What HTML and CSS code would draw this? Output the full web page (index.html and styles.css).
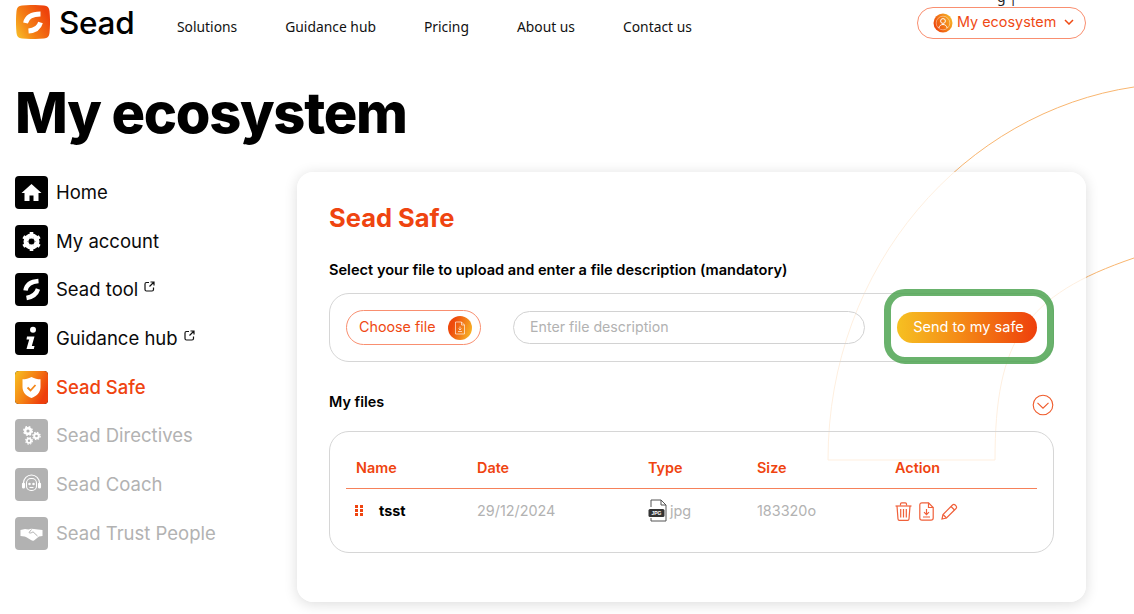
FILE: index.html
```html
<!DOCTYPE html>
<html lang="en">
<head>
    <meta charset="UTF-8">
    <meta name="viewport" content="width=device-width, initial-scale=1.0">
    <title>My ecosystem - Sead</title>
    <link rel="stylesheet" href="styles.css">
</head>
<body>
    <svg width="0" height="0" class="defs">
        <defs>
            <linearGradient id="brand" x1="0" y1="0" x2="1" y2="0.5">
                <stop offset="0" stop-color="#f7c122"/>
                <stop offset="0.55" stop-color="#f47f14"/>
                <stop offset="1" stop-color="#ee3f0c"/>
            </linearGradient>
            <linearGradient id="logo" x1="0" y1="1" x2="1" y2="0.4">
                <stop offset="0" stop-color="#f8c32a"/>
                <stop offset="0.45" stop-color="#f47f14"/>
                <stop offset="1" stop-color="#ee430c"/>
            </linearGradient>
            <linearGradient id="brand-rev" x1="0" y1="0.5" x2="1" y2="0">
                <stop offset="0" stop-color="#ee4a0c"/>
                <stop offset="1" stop-color="#f8c32a"/>
            </linearGradient>
        </defs>
    </svg>

    <!-- decorative arcs behind the card -->
    <svg class="arcs" width="1134" height="614" viewBox="0 0 1134 614">
        <path d="M1134 87C965 112 828 265 828 460H995C995 340 1025 295 1134 258"/>
    </svg>

    <div class="top-clip">g |</div>

    <header class="header">
        <a class="logo" href="#">
            <svg width="34" height="34" viewBox="0 0 34 34">
                <path d="M6 0.500C13 -0.200 21 -0.200 28 0.500C31.500 0.900 33.200 2.500 33.500 6C34.200 13 34.200 21 33.500 28C33.200 31.500 31.500 33.200 28 33.500C21 34.200 13 34.200 6 33.500C2.500 33.200 0.800 31.500 0.500 28C-0.200 21 -0.200 13 0.500 6C0.800 2.500 2.500 0.900 6 0.500Z" fill="url(#logo)"/>
                <path d="M24.500 9C17 9 11 11 9.500 18M24.500 17.500C23 23 19 25.500 12.500 26" fill="none" stroke="#fff" stroke-width="4.800"/>
            </svg>
            <span>Sead</span>
        </a>
        <nav class="nav">
            <a href="#">Solutions</a>
            <a href="#">Guidance hub</a>
            <a href="#">Pricing</a>
            <a href="#">About us</a>
            <a href="#">Contact us</a>
        </nav>
        <button class="eco-btn">
            <svg width="20" height="20" viewBox="0 0 20 20">
                <circle cx="10" cy="10" r="9.500" fill="url(#brand-rev)"/>
                <circle cx="10" cy="10" r="6.800" fill="none" stroke="#fff" stroke-opacity=".5" stroke-width=".8"/>
                <circle cx="10" cy="8" r="2.400" fill="none" stroke="#fff" stroke-width="1"/>
                <path d="M5.800 15C6.500 12.500 8 11.500 10 11.500S13.500 12.500 14.200 15" fill="none" stroke="#fff" stroke-width="1"/>
            </svg>
            <span>My ecosystem</span>
            <svg width="10" height="6" viewBox="0 0 10 6"><path d="M1 1L5 5L9 1" fill="none" stroke="#ef4a14" stroke-width="1.500"/></svg>
        </button>
    </header>

    <h1 class="title">My ecosystem</h1>

    <div class="main">
        <ul class="side">
            <li class="side-item">
                <span class="side-icon">
                    <svg width="21" height="21" viewBox="0 0 21 21"><path d="M10.500 2L20.500 11H17.500V19H12.500V13.500H8.500V19H3.500V11H0.500Z" fill="#fff"/></svg>
                </span>
                Home
            </li>
            <li class="side-item">
                <span class="side-icon">
                    <svg width="21" height="21" viewBox="0 0 21 21"><circle cx="10.500" cy="10.500" r="6" fill="none" stroke="#fff" stroke-width="4"/><path d="M10.500 1V20M2.300 5.750L18.700 15.250M18.700 5.750L2.300 15.250" stroke="#fff" stroke-width="3.600"/><circle cx="10.500" cy="10.500" r="3" fill="#000"/></svg>
                </span>
                My account
            </li>
            <li class="side-item">
                <span class="side-icon">
                    <svg width="23" height="23" viewBox="0 0 23 23"><path d="M18.500 3C12 3.500 6.500 6 5.500 12.500M18 11C16.500 16 12 19 6.500 20" fill="none" stroke="#fff" stroke-width="4.400"/></svg>
                </span>
                Sead tool
                <svg class="ext" width="11" height="11" viewBox="0 0 11 11"><path d="M5 1.500H2.500Q1 1.500 1 3V8.500Q1 10 2.500 10H8Q9.500 10 9.500 8.500V6.500M6.500 1H10V4.500M10 1L5.500 5.500" fill="none" stroke="#111" stroke-width="1.200"/></svg>
            </li>
            <li class="side-item">
                <span class="side-icon">
                    <svg width="21" height="25" viewBox="0 0 21 25"><circle cx="12" cy="3.800" r="3" fill="#fff"/><path d="M6 10.500H13.500L10.800 20H13.500L12.800 23H5.500L8.200 13.500H5.500Z" fill="#fff"/></svg>
                </span>
                Guidance hub
                <svg class="ext" width="11" height="11" viewBox="0 0 11 11"><path d="M5 1.500H2.500Q1 1.500 1 3V8.500Q1 10 2.500 10H8Q9.500 10 9.500 8.500V6.500M6.500 1H10V4.500M10 1L5.500 5.500" fill="none" stroke="#111" stroke-width="1.200"/></svg>
            </li>
            <li class="side-item active">
                <span class="side-icon">
                    <svg width="33" height="33" viewBox="0 0 33 33"><rect width="33" height="33" rx="4" fill="url(#brand)"/><path d="M16.500 6C19.500 7.800 22.500 8.300 25.500 8.300V16C25.500 21.500 21.500 25.200 16.500 27C11.500 25.200 7.500 21.500 7.500 16V8.300C10.500 8.300 13.500 7.800 16.500 6Z" fill="#fff"/><path d="M12.500 16.500L15.500 19.500L20.500 14" fill="none" stroke="#f4871a" stroke-width="1.800"/></svg>
                </span>
                Sead Safe
            </li>
            <li class="side-item off">
                <span class="side-icon">
                    <svg width="21" height="21" viewBox="0 0 21 21" fill="none" stroke="#fff"><circle cx="7" cy="6" r="2.800" stroke-width="2.400"/><circle cx="7" cy="6" r="4.300" stroke-width="1.400" stroke-dasharray="1.800 1.600"/><circle cx="15.500" cy="11" r="2.300" stroke-width="2"/><circle cx="15.500" cy="11" r="3.700" stroke-width="1.200" stroke-dasharray="1.600 1.300"/><circle cx="8" cy="15.800" r="2.100" stroke-width="1.800"/><circle cx="8" cy="15.800" r="3.400" stroke-width="1.100" stroke-dasharray="1.500 1.200"/></svg>
                </span>
                Sead Directives
            </li>
            <li class="side-item off">
                <span class="side-icon">
                    <svg width="23" height="23" viewBox="0 0 23 23" fill="none" stroke="#fff" stroke-width="1.100"><path d="M3.500 12V10A8 8 0 0 1 19.500 10V12"/><rect x="6.500" y="5.500" width="10" height="12" rx="4.500"/><rect x="2.500" y="10" width="2" height="5" rx="1" fill="#fff"/><rect x="18.500" y="10" width="2" height="5" rx="1" fill="#fff"/><path d="M9.500 14.500H13.500"/><circle cx="9.500" cy="11" r=".7" fill="#fff"/><circle cx="13.500" cy="11" r=".7" fill="#fff"/></svg>
                </span>
                Sead Coach
            </li>
            <li class="side-item off">
                <span class="side-icon">
                    <svg width="23" height="23" viewBox="0 0 23 23"><path d="M0.500 8L5 7L8.500 7.500L11 6.800L14 7L18 7.500L22.500 8V14L19 14.500L14 18.500C13 19 12 18.800 11 18L6 15L4.500 14.500L0.500 14Z" fill="#fff"/><path d="M11.500 7.500L9 10.500C10 11.500 11.500 11 13 9.800L17.500 14" fill="none" stroke="#b2b2b2" stroke-width="1"/></svg>
                </span>
                Sead Trust People
            </li>
        </ul>

        <section class="card">
            <h2 class="card-title">Sead Safe</h2>
            <p class="label">Select your file to upload and enter a file description (mandatory)</p>

            <div class="upload">
                <button class="choose">
                    Choose file
                    <span class="choose-icon">
                        <svg width="12" height="14" viewBox="0 0 12 14" fill="none" stroke="#fff" stroke-opacity=".7" stroke-width=".9"><path d="M1.500 1H7.500L10.500 4V13H1.500Z"/><path d="M7.500 1V4H10.500"/><path d="M4 10.500H8M6 5.500V9M4.500 7.500L6 9L7.500 7.500"/></svg>
                    </span>
                </button>
                <input class="desc" type="text" placeholder="Enter file description">
                <button class="send">Send to my safe</button>
                <span class="highlight"></span>
            </div>

            <div class="files-head">
                <h3 class="files-title">My files</h3>
                <svg width="22" height="22" viewBox="0 0 22 22" fill="none" stroke="#ef5a2a" stroke-width="1.100"><circle cx="11" cy="11" r="9.800"/><path d="M5.500 8.800L11 14.200L16.500 8.800"/></svg>
            </div>

            <div class="files">
                <div class="row row-head">
                    <span>Name</span>
                    <span>Date</span>
                    <span>Type</span>
                    <span>Size</span>
                    <span>Action</span>
                </div>
                <div class="row row-file">
                    <span class="file-name">
                        <svg width="8" height="11" viewBox="0 0 8 11" fill="#ef4410"><rect x="0" y="0" width="3" height="3"/><rect x="5" y="0" width="3" height="3"/><rect x="0" y="4" width="3" height="3"/><rect x="5" y="4" width="3" height="3"/><rect x="0" y="8" width="3" height="3"/><rect x="5" y="8" width="3" height="3"/></svg>
                        tsst
                    </span>
                    <span>29/12/2024</span>
                    <span class="file-type">
                        <svg width="19" height="23" viewBox="0 0 19 23"><path d="M3 8V1H13L18 6V22H3V19" fill="none" stroke="#555" stroke-width="1"/><path d="M13 1V6H18" fill="none" stroke="#555" stroke-width="1"/><rect x="0.500" y="10" width="16" height="8" rx="1.500" fill="#333"/><text x="8.500" y="16" text-anchor="middle" class="jpg-label">JPG</text></svg>
                        jpg
                    </span>
                    <span>183320o</span>
                    <span class="actions">
                        <svg width="17" height="19" viewBox="0 0 17 19" fill="none" stroke="#f0603a" stroke-width="1.200"><path d="M0.500 4H16.500"/><path d="M5.500 3.500V2Q5.500 0.800 6.700 0.800H10.300Q11.500 0.800 11.500 2V3.500"/><path d="M2 4L3 17Q3.100 18.300 4.300 18.300H12.700Q13.900 18.300 14 17L15 4"/><path d="M5.700 7V15.500M8.500 7V15.500M11.300 7V15.500"/></svg>
                        <svg width="15" height="19" viewBox="0 0 15 19" fill="none" stroke="#f0603a" stroke-width="1.200"><path d="M9.500 0.800H3Q0.800 0.800 0.800 3V16Q0.800 18.200 3 18.200H12Q14.200 18.200 14.200 16V5.500Z"/><path d="M9.500 0.800V5.500H14.200"/><path d="M7.500 7V12.500M5 10.200L7.500 12.700L10 10.200M4 15H11"/></svg>
                        <svg width="17" height="17" viewBox="0 0 17 17" fill="none" stroke="#f0603a" stroke-width="1.200"><path d="M1 16L2 11.500L11.500 2Q12.800 0.800 14.200 2L15 2.800Q16.200 4.200 15 5.500L5.500 15Z"/><path d="M10 3.500L13.500 7M2 11.500L5.500 15"/></svg>
                    </span>
                </div>
            </div>
        </section>
    </div>
</body>
</html>
```

FILE: styles.css
```css
* { box-sizing: border-box; }
html, body { height: 614px; overflow: hidden; }
body {
    margin: 0;
    background: #fff;
    color: #000;
    font-family: Inter, "Liberation Sans", sans-serif;
    position: relative;
}
a { color: inherit; text-decoration: none; }
.defs { position: absolute; }
.arcs { position: absolute; left: 0; top: 0; }
.arcs path { fill: none; stroke: #f9b670; stroke-width: 1; }
.top-clip {
    position: absolute;
    left: 997px;
    top: -13px;
    font: 14px "Noto Sans", sans-serif;
    color: #222;
}

.header {
    position: relative;
    display: flex;
    align-items: flex-start;
    height: 85px;
    padding: 5px 48px 0 16px;
}
.logo {
    display: flex;
    align-items: center;
    gap: 9px;
    width: 161px;
    height: 34px;
    font-size: 31.500px;
    font-weight: 500;
    letter-spacing: -0.3px;
}
.nav {
    display: flex;
    gap: 48px;
    padding-top: 12px;
    font: 13.850px/20px "Noto Sans", sans-serif;
    color: #111;
}
.eco-btn {
    margin: 2px 0 0 auto;
    display: flex;
    align-items: center;
    gap: 4px;
    width: 169px;
    height: 32px;
    padding: 0 0 0 15px;
    background: #fff;
    border: 1px solid #f98f70;
    border-radius: 16px;
    color: #ef4a14;
    font: 14.400px Inter, sans-serif;
}
.eco-btn span { margin-top: -4px; }
.eco-btn svg:last-child { margin-left: 4px; margin-top: -2px; }

.title {
    position: relative;
    margin: 0 0 0 15px;
    height: 87px;
    font-size: 56px;
    line-height: 56px;
    font-weight: 800;
    letter-spacing: -1.300px;
}

.main {
    position: relative;
    display: flex;
    align-items: flex-start;
}
.side {
    list-style: none;
    margin: 4px 0 0;
    padding: 0 0 0 15px;
    width: 297px;
}
.side-item {
    display: flex;
    align-items: center;
    height: 33px;
    margin-bottom: 15.700px;
    font-size: 18.500px;
    line-height: 31px;
    color: #0a0a0a;
    white-space: nowrap;
}
.side-icon {
    display: flex;
    align-items: center;
    justify-content: center;
    width: 33px;
    height: 33px;
    margin-right: 8px;
    background: #000;
    border-radius: 4px;
    flex: none;
}
.ext { margin: -6px 0 0 6px; }
.active { color: #ef4410; font-weight: 500; }
.off { color: #b2b2b2; }
.off .side-icon { background: #b2b2b2; }

.card {
    width: 789px;
    height: 430px;
    padding: 31px 32px 0;
    background: rgba(255, 255, 255, 0.78);
    border-radius: 16px;
    box-shadow: 0 2px 14px rgba(0, 0, 0, 0.14);
}
.card-title {
    margin: 0;
    font-size: 25.500px;
    line-height: 30px;
    font-weight: 700;
    color: #ef4410;
}
.label {
    margin: 27px 0 0;
    font-size: 14.600px;
    line-height: 20px;
    font-weight: 600;
}
.upload {
    position: relative;
    display: flex;
    align-items: center;
    height: 69px;
    margin: 13px 0 0;
    padding: 0 16px;
    border: 1px solid #d6d6d6;
    border-radius: 20px;
}
.choose {
    display: flex;
    align-items: center;
    justify-content: space-between;
    width: 135px;
    height: 35px;
    padding: 0 8px 2px 12px;
    background: transparent;
    border: 1px solid #f98f70;
    border-radius: 18px;
    color: #ef4a14;
    font: 14.300px Inter, sans-serif;
}
.choose-icon {
    display: flex;
    align-items: center;
    justify-content: center;
    width: 24px;
    height: 24px;
    margin-top: 2px;
    border-radius: 50%;
    background: linear-gradient(110deg, #ee4a0c 25%, #f8c32a 100%);
}
.desc {
    width: 352px;
    height: 33px;
    margin-left: 32px;
    padding: 0 16px 3px;
    background: transparent;
    border: 1px solid #d2d2d2;
    border-radius: 17px;
    font: 14.200px Inter, sans-serif;
    outline: none;
}
.desc::placeholder { color: #b2b2b2; opacity: 1; }
.send {
    width: 140px;
    height: 31px;
    margin-left: 32px;
    padding: 0 0 2px 3px;
    background: linear-gradient(90deg, #f6c022 0%, #f48a16 45%, #ee3f0c 100%);
    border: none;
    border-radius: 16px;
    color: #fff;
    font: 14.500px Inter, sans-serif;
}
.highlight {
    position: absolute;
    left: 554px;
    top: -5px;
    width: 170px;
    height: 75px;
    border: 7px solid rgba(76, 163, 80, 0.84);
    border-radius: 21px;
}

.files-head {
    display: flex;
    justify-content: space-between;
    align-items: center;
    height: 22px;
    margin-top: 32px;
}
.files-title {
    margin: -7px 0 0;
    font-size: 14.400px;
    font-weight: 600;
    line-height: 20px;
}
.files {
    height: 122px;
    margin-top: 15px;
    padding: 16px 16px 0;
    border: 1px solid #d6d6d6;
    border-radius: 20px;
}
.row {
    display: grid;
    grid-template-columns: 121px 171px 109px 138px 1fr;
    padding-left: 10px;
    font-size: 14.400px;
}
.row-head {
    height: 41px;
    padding-top: 11px;
    line-height: 18px;
    border-bottom: 1px solid #f6815a;
    color: #ef4410;
    font-weight: 600;
}
.row-file {
    align-items: center;
    height: 43px;
    color: #b2b2b2;
}
.file-name {
    display: flex;
    align-items: center;
    gap: 16px;
    margin-left: -1px;
    color: #000;
    font-weight: 700;
}
.file-type {
    display: flex;
    align-items: center;
    gap: 3px;
}
.jpg-label {
    font: 700 5px "Liberation Sans", sans-serif;
    fill: #fff;
}
.actions {
    display: flex;
    align-items: center;
    gap: 7px;
    margin-top: 2px;
}
```
